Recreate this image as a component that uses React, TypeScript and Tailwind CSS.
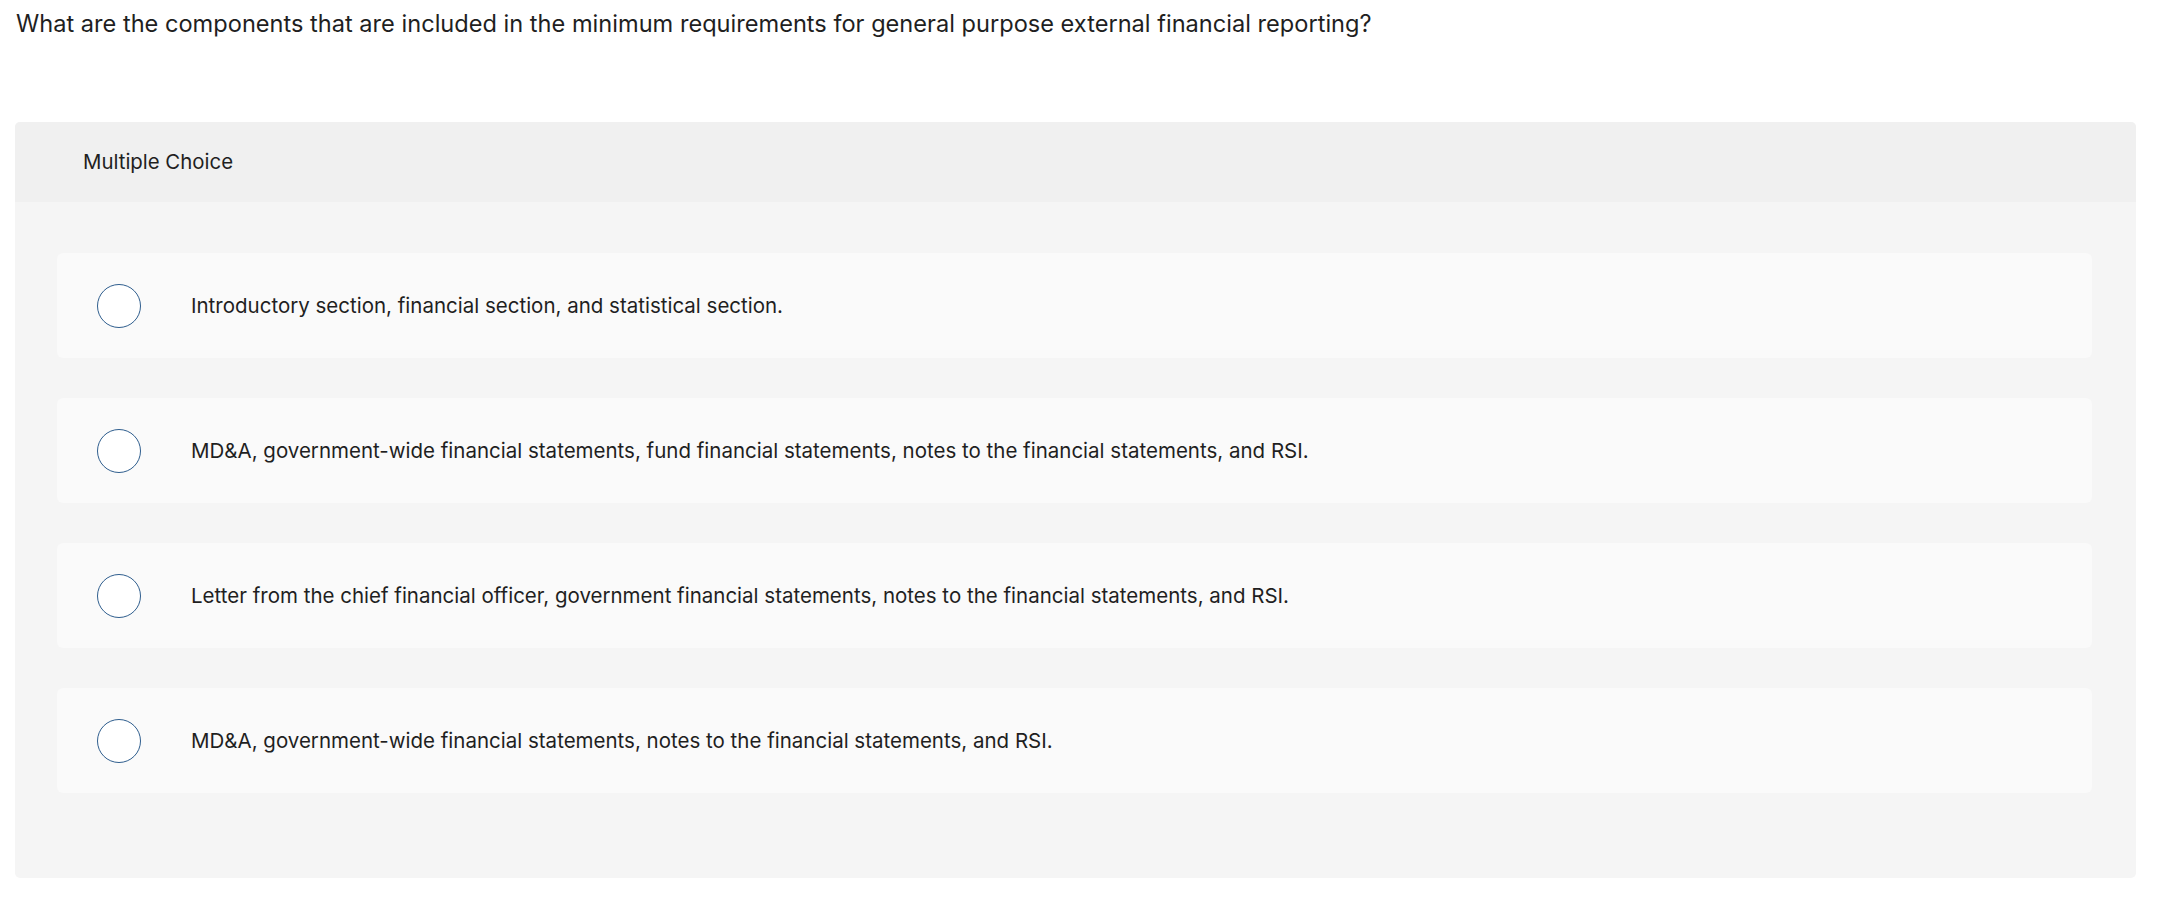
import React, { useState } from 'react';

const question =
  'What are the components that are included in the minimum requirements for general purpose external financial reporting?';

const choices = [
  'Introductory section, financial section, and statistical section.',
  'MD&A, government-wide financial statements, fund financial statements, notes to the financial statements, and RSI.',
  'Letter from the chief financial officer, government financial statements, notes to the financial statements, and RSI.',
  'MD&A, government-wide financial statements, notes to the financial statements, and RSI.',
];

const Choice: React.FC<{ label: string; selected: boolean; onSelect: () => void }> = ({ label, selected, onSelect }) => (
  <button
    type="button"
    onClick={onSelect}
    className="flex h-[105px] w-full items-center rounded-[6px] bg-[#fafafa] pl-[40px] text-left"
  >
    <span className="flex h-[44px] w-[44px] shrink-0 items-center justify-center rounded-full border-[1.5px] border-[#2f5e8e] bg-white">
      {selected && <span className="h-[22px] w-[22px] rounded-full bg-[#2f5e8e]" />}
    </span>
    <span className="ml-[50px] text-[20.5px] leading-[28px] text-[#1f1f1f]">{label}</span>
  </button>
);

export default function App() {
  const [picked, setPicked] = useState<number | null>(null);

  return (
    <div className="min-h-screen bg-white font-['Inter',sans-serif] text-[#1f1f1f]">
      {/* Question stem */}
      <div className="pl-[16px] pt-[10px] text-[23.6px] leading-[28px]">{question}</div>

      {/* Answer panel */}
      <div className="ml-[15px] mt-[84px] w-[2121px] overflow-hidden rounded-[5px] bg-[#f5f5f5]">
        <div className="flex h-[80px] items-center bg-[#f0f0f0] pl-[68px] text-[20.4px]">Multiple Choice</div>
        <div className="flex flex-col gap-[40px] pb-[85px] pl-[42px] pr-[44px] pt-[51px]">
          {choices.map((c, i) => (
            <Choice key={i} label={c} selected={picked === i} onSelect={() => setPicked(i)} />
          ))}
        </div>
      </div>
    </div>
  );
}
